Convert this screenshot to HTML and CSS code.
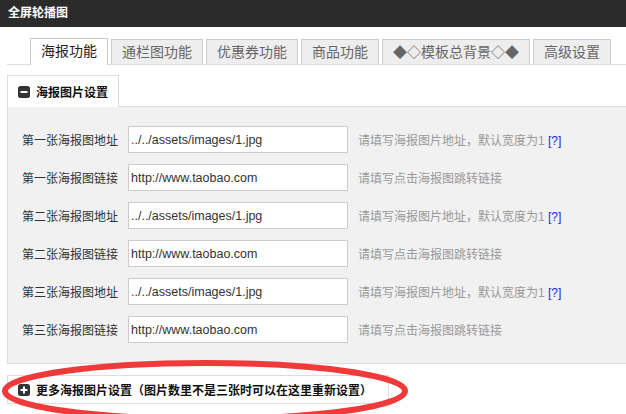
FILE: index.html
```html
<!DOCTYPE html>
<html lang="zh-CN">
<head>
    <meta charset="UTF-8">
    <title>全屏轮播图</title>
    <link rel="stylesheet" href="styles.css">
</head>
<body>
    <header class="topbar">全屏轮播图</header>

    <main class="page">
        <ul class="tabs">
            <li class="tab active">海报功能</li>
            <li class="tab">通栏图功能</li>
            <li class="tab">优惠券功能</li>
            <li class="tab">商品功能</li>
            <li class="tab">◆◇模板总背景◇◆</li>
            <li class="tab">高级设置</li>
        </ul>

        <div class="section">
            <div class="section-head">
                <svg class="icon" viewBox="0 0 12 12"><rect width="12" height="12" rx="2.5" fill="#333"/><rect x="2.5" y="5" width="7" height="2" fill="#fff"/></svg>
                海报图片设置
            </div>
            <div class="section-body">
                <div class="row">
                    <label>第一张海报图地址</label>
                    <input type="text" class="form-control" value="../../assets/images/1.jpg">
                    <span class="hint">请填写海报图片地址，默认宽度为1 <a href="#">[?]</a></span>
                </div>
                <div class="row">
                    <label>第一张海报图链接</label>
                    <input type="text" class="form-control" value="http://www.taobao.com">
                    <span class="hint">请填写点击海报图跳转链接</span>
                </div>
                <div class="row">
                    <label>第二张海报图地址</label>
                    <input type="text" class="form-control" value="../../assets/images/1.jpg">
                    <span class="hint">请填写海报图片地址，默认宽度为1 <a href="#">[?]</a></span>
                </div>
                <div class="row">
                    <label>第二张海报图链接</label>
                    <input type="text" class="form-control" value="http://www.taobao.com">
                    <span class="hint">请填写点击海报图跳转链接</span>
                </div>
                <div class="row">
                    <label>第三张海报图地址</label>
                    <input type="text" class="form-control" value="../../assets/images/1.jpg">
                    <span class="hint">请填写海报图片地址，默认宽度为1 <a href="#">[?]</a></span>
                </div>
                <div class="row">
                    <label>第三张海报图链接</label>
                    <input type="text" class="form-control" value="http://www.taobao.com">
                    <span class="hint">请填写点击海报图跳转链接</span>
                </div>
            </div>
        </div>

        <div class="section collapsed">
            <div class="section-head">
                <svg class="icon" viewBox="0 0 12 12"><rect width="12" height="12" rx="2.5" fill="#333"/><rect x="2.5" y="5" width="7" height="2" fill="#fff"/><rect x="5" y="2.5" width="2" height="7" fill="#fff"/></svg>
                更多海报图片设置（图片数里不是三张时可以在这里重新设置）
            </div>
        </div>

        <svg class="mark" viewBox="0 0 420 60"><ellipse cx="205" cy="33" rx="200" ry="28" fill="none" stroke="#f03a3a" stroke-width="6"/></svg>
    </main>
</body>
</html>
```

FILE: styles.css
```css
* {
    box-sizing: border-box;
}

html,
body {
    margin: 0;
    padding: 0;
    overflow: hidden;
}

body {
    font-family: "Liberation Sans", "Noto Sans CJK SC", sans-serif;
    font-size: 12px;
    color: #333;
    background: #fff;
    position: relative;
    height: 414px;
}

.topbar {
    height: 27px;
    line-height: 27px;
    padding-left: 8px;
    background-color: #2b2b2b;
    color: #fff;
    font-weight: bold;
}

.page {
    padding-left: 7px;
}

.tabs {
    display: flex;
    align-items: flex-end;
    gap: 3px;
    list-style: none;
    margin: 11px 0 0;
    padding: 0 0 0 23px;
    border-bottom: 1px solid #ddd;
    height: 27px;
}

.tab {
    height: 25px;
    line-height: 24px;
    padding: 0 10px;
    font-size: 14px;
    color: #666;
    background-color: #eee;
    border: 1px solid #ccc;
    border-bottom: none;
    white-space: nowrap;
}

.tab.active {
    height: 27px;
    line-height: 25px;
    margin-bottom: -1px;
    color: #222;
    background-color: #fff;
}

.section {
    margin-top: 10px;
}

.section-head {
    position: relative;
    display: inline-flex;
    align-items: center;
    gap: 6px;
    height: 32px;
    margin-bottom: -1px;
    padding: 0 10px;
    background: #fff;
    border: 1px solid #ddd;
    border-bottom: none;
    font-weight: bold;
    color: #111;
    white-space: nowrap;
}

.icon {
    width: 12px;
    height: 12px;
}

/* panel runs on past the right edge of the window */
.section-body {
    background-color: #f1f1f1;
    border: 1px solid #ddd;
    border-right: none;
    padding: 19px 0 9px 14px;
}

.row {
    display: flex;
    align-items: center;
    height: 27px;
    margin-bottom: 11px;
    white-space: nowrap;
}

.row label {
    flex: none;
    width: 96px;
    margin-right: 10px;
    text-align: right;
}

.form-control {
    flex: none;
    width: 220px;
    height: 27px;
    padding: 0 2px;
    border: 1px solid #ccc;
    background: #fff;
    font-family: "Liberation Sans", sans-serif;
    font-size: 12.5px;
    color: #333;
    outline: none;
}

.hint {
    margin-left: 10px;
    color: #999;
}

.hint a {
    color: #2222ee;
    text-decoration: none;
}

.section.collapsed {
    margin-top: 11px;
}

.section.collapsed .section-head {
    height: 29px;
    margin-bottom: 0;
    padding-right: 16px;
    border-bottom: 1px solid #ddd;
}

.mark {
    position: absolute;
    left: 0;
    top: 358px;
    width: 420px;
    height: 60px;
    overflow: visible;
}
```
